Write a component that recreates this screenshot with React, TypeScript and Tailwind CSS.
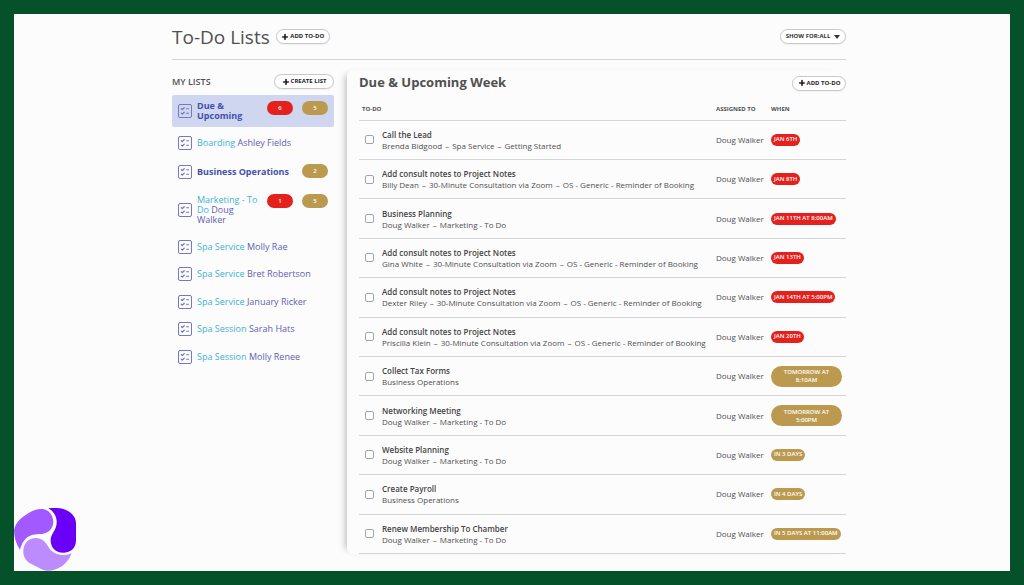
import { Plus } from 'lucide-react';

const lists = [
  { first: '', rest: 'Due & Upcoming', bold: true, active: true, overdue: 6, upcoming: 5, height: 'min-h-8' },
  { first: 'Boarding', rest: 'Ashley Fields', height: 'min-h-7' },
  { first: '', rest: 'Business Operations', bold: true, upcoming: 2, height: 'min-h-7' },
  { first: 'Marketing - To Do', rest: 'Doug Walker', overdue: 1, upcoming: 5, height: 'min-h-11' },
  { first: 'Spa Service', rest: 'Molly Rae', height: 'min-h-6.5' },
  { first: 'Spa Service', rest: 'Bret Robertson', height: 'min-h-6.5' },
  { first: 'Spa Service', rest: 'January Ricker', height: 'min-h-6.5' },
  { first: 'Spa Session', rest: 'Sarah Hats', height: 'min-h-6.5' },
  { first: 'Spa Session', rest: 'Molly Renee', height: 'min-h-6.5' },
];

const reminder = ['30-Minute Consultation via Zoom', 'OS - Generic - Reminder of Booking'];

const todos = [
  { title: 'Call the Lead', path: ['Brenda Bidgood', 'Spa Service', 'Getting Started'], when: 'JAN 6TH', late: true },
  { title: 'Add consult notes to Project Notes', path: ['Billy Dean', ...reminder], when: 'JAN 8TH', late: true },
  { title: 'Business Planning', path: ['Doug Walker', 'Marketing - To Do'], when: 'JAN 11TH AT 8:00AM', late: true },
  { title: 'Add consult notes to Project Notes', path: ['Gina White', ...reminder], when: 'JAN 13TH', late: true },
  { title: 'Add consult notes to Project Notes', path: ['Dexter Riley', ...reminder], when: 'JAN 14TH AT 5:00PM', late: true },
  { title: 'Add consult notes to Project Notes', path: ['Priscilla Klein', ...reminder], when: 'JAN 20TH', late: true },
  { title: 'Collect Tax Forms', path: ['Business Operations'], when: 'TOMORROW AT 8:10AM', wide: true },
  { title: 'Networking Meeting', path: ['Doug Walker', 'Marketing - To Do'], when: 'TOMORROW AT 5:00PM', wide: true },
  { title: 'Website Planning', path: ['Doug Walker', 'Marketing - To Do'], when: 'IN 3 DAYS' },
  { title: 'Create Payroll', path: ['Business Operations'], when: 'IN 4 DAYS' },
  { title: 'Renew Membership To Chamber', path: ['Doug Walker', 'Marketing - To Do'], when: 'IN 5 DAYS AT 11:00AM' },
];

function PillButton({ label, width }: { label: string; width: string }) {
  return (
    <button className={`flex h-[15px] items-center justify-center gap-px rounded-full border border-[#c8c8c8] bg-white text-[6px] font-bold text-[#222] shadow-xs ${width}`}>
      <Plus className="h-2 w-2" strokeWidth={5} />
      {label}
    </button>
  );
}

function ListIcon() {
  return (
    <svg viewBox="0 0 14 14" className="h-3.5 w-3.5 shrink-0" fill="none" stroke="#7478bf" strokeLinecap="round" strokeLinejoin="round">
      <rect x="0.5" y="0.5" width="13" height="13" rx="1.5" strokeWidth="1" />
      <path d="M3.4 4.7l.9.9 1.9-1.9M3.4 9.2l.9.9 1.9-1.9" strokeWidth="1.3" />
      <path d="M8.6 4.8h2M8.6 9.3h2" strokeWidth="1.1" />
    </svg>
  );
}

function CountBadge({ count, color }: { count: number; color: string }) {
  return (
    <span className={`flex h-3.5 w-[26px] items-center justify-center rounded-full text-[6px] font-semibold text-white ${color}`}>
      {count}
    </span>
  );
}

function Logo() {
  return (
    <svg viewBox="42 54 186 189" className="absolute bottom-0 left-0 h-[63px] w-[62px]">
      <path fill="#6a00f8" d="M145 55C155 53 180 54 190 57C212 64 228 80 228 100V150C228 175 212 188 190 188C165 188 152 172 152 150C152 130 172 120 170 92C168 75 158 62 145 55Z" />
      <path fill="#a259ff" d="M60 180C48 160 42 140 42 122C45 100 60 85 85 70C105 57 120 55 132 58C150 62 160 80 160 97C158 118 145 130 125 132C105 132 85 134 72 152C66 160 62 170 60 180Z" />
      <path fill="#bc8cff" d="M70 180C72 158 88 144 108 144C128 145 138 158 145 170C155 188 175 196 195 195C203 194 210 192 215 188C208 210 195 222 180 232C160 243 145 246 125 238L90 220C76 210 69 200 70 180Z" />
    </svg>
  );
}

export default function App() {
  return (
    <div className="relative min-h-screen border-[14px] border-[#05512a] bg-[#fbfcfb] font-['Open_Sans',sans-serif] text-[#505050]">
      <div className="mx-auto max-w-[680px] pr-1.5">
        {/* Page header */}
        <header className="flex h-[46px] items-center gap-1.5 border-b border-[#d4d5d6]">
          <h1 className="text-[19px] leading-6">To-Do Lists</h1>
          <PillButton label="ADD TO-DO" width="w-[54px]" />
          <button className="ml-auto flex h-[15px] w-[66px] items-center justify-center gap-1 rounded-full border border-[#c8c8c8] bg-white text-[6px] font-bold text-[#333] shadow-xs">
            SHOW FOR:ALL
            <svg viewBox="0 0 6 4" className="h-1 w-1.5" fill="#333">
              <path d="M0 0h6L3 4z" />
            </svg>
          </button>
        </header>

        <div className="flex">
          {/* Lists */}
          <aside className="w-[162px] shrink-0 pt-3.5">
            <div className="flex h-[15px] items-center justify-between">
              <h2 className="text-[9px] font-semibold">MY LISTS</h2>
              <PillButton label="CREATE LIST" width="w-[60px]" />
            </div>
            <ul className="mt-1.5 flex h-[275px] flex-col justify-between">
              {lists.map((list) => (
                <li key={list.first + list.rest}>
                  <a
                    href="#"
                    className={`flex items-center gap-[5px] p-1.5 text-[9px] leading-[10px] ${list.height} ${list.active ? 'rounded-xs bg-[#cfd6ef]' : ''}`}
                  >
                    <ListIcon />
                    <span className={`flex-1 ${list.bold ? 'font-bold text-[#4650ad]' : 'text-[#5d5fb4]'}`}>
                      {list.first && <span className="text-[#3fb3d3]">{list.first} </span>}
                      <span>{list.rest}</span>
                    </span>
                    <span className="flex gap-[9px] self-start">
                      {list.overdue && <CountBadge count={list.overdue} color="bg-[#e4211c]" />}
                      {list.upcoming && <CountBadge count={list.upcoming} color="bg-[#bb9a50]" />}
                    </span>
                  </a>
                </li>
              ))}
            </ul>
          </aside>

          {/* To-dos of the selected list */}
          <main className="mt-2.5 ml-[13px] min-w-0 flex-1 rounded-md bg-[#fcfcfd] pl-3 shadow-[-6px_0_7px_-5px_rgba(0,0,0,0.3)]">
            <div className="mb-1 flex h-[26px] items-center justify-between">
              <h2 className="text-[13px] font-bold">Due &amp; Upcoming Week</h2>
              <PillButton label="ADD TO-DO" width="w-[54px]" />
            </div>
            <table className="h-[454px] w-full table-fixed border-collapse text-left">
              <thead>
                <tr className="h-5 border-b border-[#d4d5d6] text-[6px] font-semibold">
                  <th className="pl-[3px]">TO-DO</th>
                  <th className="w-[55px]">ASSIGNED TO</th>
                  <th className="w-[75px]">WHEN</th>
                </tr>
              </thead>
              <tbody>
                {todos.map((todo, index) => (
                  <tr key={index} className="border-b border-[#d4d5d6]">
                    <td className="pl-1.5">
                      <label className="flex items-center gap-2">
                        <input type="checkbox" className="h-[9px] w-[9px] shrink-0 appearance-none rounded-xs border border-[#a5a5a5] bg-white" />
                        <span className="text-[8px] leading-[11px] whitespace-nowrap">
                          <span className="block font-semibold text-[#444]">{todo.title}</span>
                          <span className="flex gap-[3px]">
                            {todo.path.map((part, i) => (
                              <span key={part}>
                                {i > 0 && <span className="mr-[3px]">–</span>}
                                {part}
                              </span>
                            ))}
                          </span>
                        </span>
                      </label>
                    </td>
                    <td className="text-[8px]">Doug Walker</td>
                    <td>
                      <span
                        className={`flex w-fit items-center justify-center rounded-full text-center text-[6px] font-semibold text-white ${todo.late ? 'bg-[#e4211c]' : 'bg-[#bb9a50]'} ${todo.wide ? 'h-[21px] max-w-[71px] px-3 leading-2' : 'h-3 px-[3px] whitespace-nowrap'}`}
                      >
                        {todo.when}
                      </span>
                    </td>
                  </tr>
                ))}
              </tbody>
            </table>
          </main>
        </div>
      </div>
      <Logo />
    </div>
  );
}
